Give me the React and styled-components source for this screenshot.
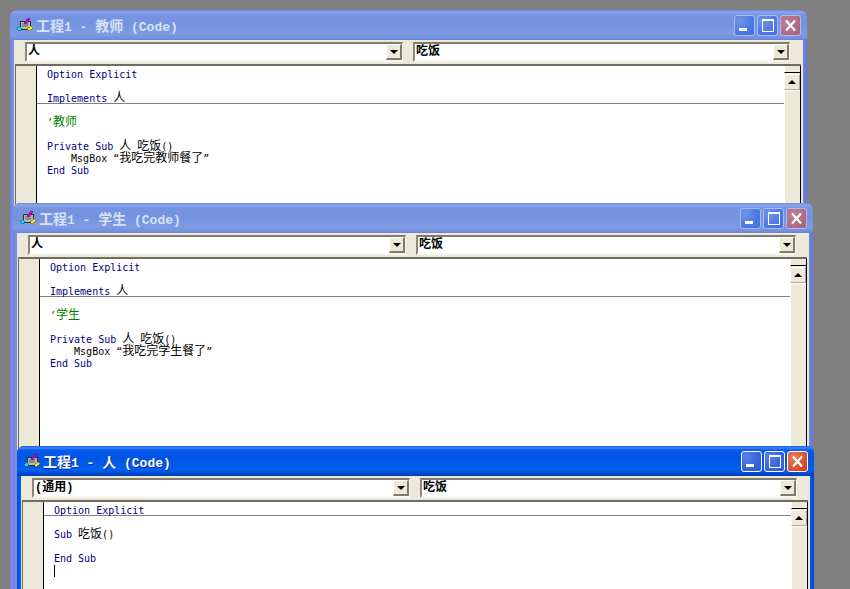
import React from "react";
import styled, { createGlobalStyle } from "styled-components";

const GlobalStyle = createGlobalStyle`
  html, body {
    margin: 0;
    height: 100%;
    overflow: hidden;
    background: #808080;
  }
`;

const MONO = `"DejaVu Sans Mono", "Liberation Mono", "Noto Sans CJK SC", monospace`;
const TITLE_MONO = `"Liberation Mono", "Noto Sans CJK SC", monospace`;

const Desktop = styled.div`
  position: relative;
  width: 850px;
  height: 589px;
  overflow: hidden;
  background: #808080;
`;

const Window = styled.div`
  position: absolute;
  left: ${(p) => p.$x}px;
  top: ${(p) => p.$y}px;
  width: ${(p) => p.$w}px;
  height: 600px;
  box-sizing: border-box;
  padding: 0 4px;
  border-radius: 7px 7px 0 0;
  display: flex;
  flex-direction: column;
  background: ${(p) =>
    p.$active
      ? "linear-gradient(90deg, #0047d8 0, #0058ee 2px, #0058ee calc(100% - 2px), #0040c8 100%)"
      : "linear-gradient(90deg, #6f7fdc 0, #7b8ce4 2px, #6f7fe0 calc(100% - 2px), #6470d4 100%)"};
`;

const TitleBar = styled.div`
  height: 30px;
  margin: 0 -4px;
  padding: 0 6px 0 7px;
  flex: none;
  box-sizing: border-box;
  display: flex;
  align-items: center;
  border-radius: 7px 7px 0 0;
  background: ${(p) =>
    p.$active
      ? "linear-gradient(180deg, #0a5fe8 0, #3d86f6 2px, #0a5bf0 4px, #0054e3 12px, #0060f0 24px, #0048c8 28px, #0038b0 30px)"
      : "linear-gradient(180deg, #6a86dc 0, #8ba5ec 2px, #7694e2 5px, #7392e0 14px, #7e9be4 24px, #7590de 28px, #6a7fd8 30px)"};
`;

const TitleText = styled.span`
  margin-left: 3px;
  font: bold 13px ${TITLE_MONO};
  white-space: pre;
  color: ${(p) => (p.$active ? "#ffffff" : "#d8e2f6")};
  text-shadow: ${(p) => (p.$active ? "1px 1px 0 #0a2f98" : "none")};
`;

const Wide = styled.span`
  font-size: 14px;
`;

const CaptionButtons = styled.div`
  margin-left: auto;
  display: flex;
  gap: 2px;
`;

const CaptionButton = styled.div`
  width: 21px;
  height: 21px;
  box-sizing: border-box;
  border-radius: 3px;
  display: flex;
  align-items: center;
  justify-content: center;
  border: 1px solid ${(p) => (p.$active ? "#ffffff" : "#a9bbf0")};
  background: ${(p) =>
    p.$close
      ? p.$active
        ? "radial-gradient(circle at 30% 30%, #e8815f, #d8482a 70%, #c73818)"
        : "radial-gradient(circle at 30% 30%, #bd7f95, #b06880 70%, #a85c7c)"
      : p.$active
      ? "radial-gradient(circle at 25% 25%, #5a80e8, #3a66dc 55%, #2a55e0)"
      : "radial-gradient(circle at 25% 25%, #7094e6, #4d78e4 60%, #3f6ee8)"};
`;

const ClientArea = styled.div`
  flex: 1;
  display: flex;
  flex-direction: column;
  background: #ece9d8;
`;

const ComboBar = styled.div`
  flex: none;
  height: 24px;
  box-sizing: border-box;
  padding: 2px 13px 0 11px;
  display: flex;
  gap: 10px;
`;

const Combo = styled.div`
  flex: ${(p) => (p.$fixed ? "0 0 378px" : "1")};
  height: 20px;
  box-sizing: border-box;
  display: flex;
  align-items: center;
  justify-content: space-between;
  background: #ffffff;
  border-style: solid;
  border-width: 2px 1px 2px 2px;
  border-color: #7f7c6e #f7f6ef #f7f6ef #8c897a;
`;

const ComboText = styled.span`
  padding-left: 1px;
  font: bold 12px/14px ${TITLE_MONO};
  color: #000000;
`;

const ArrowButton = styled.div`
  width: 16px;
  height: 16px;
  box-sizing: border-box;
  display: flex;
  align-items: center;
  justify-content: center;
  background: #ece9d8;
  border-style: solid;
  border-width: 1px 2px 2px 1px;
  border-color: #ffffff #7f7c6e #7f7c6e #ffffff;
`;

const Triangle = styled.i`
  display: block;
  width: 0;
  height: 0;
  border-left: 4px solid transparent;
  border-right: 4px solid transparent;
  ${(p) => (p.$up ? "border-bottom" : "border-top")}: 4px solid #000000;
`;

const CodePane = styled.div`
  flex: 1;
  margin: 0 2px 0 1px;
  display: flex;
  background: #ffffff;
  border-top: 2px solid #6f6d62;
  border-left: 1px solid #6f6d62;
`;

const Gutter = styled.div`
  flex: none;
  width: 20px;
  background: #ece9d8;
  border-right: 1px solid #000000;
`;

const Code = styled.div`
  flex: 1;
  padding-top: 2px;
  font: 10px/12px ${MONO};
  color: #000000;
`;

const Line = styled.div`
  height: 12px;
  box-sizing: border-box;
  padding: 1px 0 0 10px;
  white-space: pre;
  border-bottom: ${(p) => (p.$rule ? "1px solid #808080" : "none")};
`;

const Keyword = styled.span`
  color: #000080;
`;

const Note = styled.span`
  color: #008000;
`;

const Han = styled.span`
  font-size: 12px;
  line-height: 0;
`;

const Caret = styled.i`
  display: inline-block;
  width: 1px;
  height: 12px;
  vertical-align: top;
  background: #000000;
`;

const ScrollBar = styled.div`
  flex: none;
  width: 17px;
  box-sizing: border-box;
  display: flex;
  flex-direction: column;
  border-right: 1px solid #000000;
  background: #ece9d8;
`;

const SplitBox = styled.div`
  flex: none;
  height: 7px;
  box-sizing: border-box;
  background: #ece9d8;
  border-left: 1px solid #ffffff;
  border-bottom: 1px solid #000000;
`;

const ScrollButton = styled.div`
  flex: none;
  height: 16px;
  margin-top: 1px;
  box-sizing: border-box;
  display: flex;
  align-items: center;
  justify-content: center;
  background: #ece9d8;
  border-style: solid;
  border-width: 1px;
  border-color: #ffffff #aca899 #aca899 #ffffff;
`;

const Track = styled.div`
  flex: 1;
  background: #ece9d8;
  border-top: 1px solid #ffffff;
  border-left: 1px solid #ffffff;
`;

const AppIcon = () => (
  <svg width="16" height="14" viewBox="0 0 16 14" shapeRendering="crispEdges" style={{ flex: "none" }}>
    <path d="M3 3h10v8H3z" fill="#b8b8b0" stroke="#303030" />
    <path d="M5 5h6v4H5z" fill="#8c8c88" />
    <path d="M7 5l4-5 2 1-4 5z" fill="#e000c8" stroke="#500050" strokeWidth="0.5" />
    <path d="M0 10l3-2 2 3-3 2z" fill="#18e0e8" stroke="#005060" strokeWidth="0.5" />
    <path d="M10 11l4-3 2 2-4 3z" fill="#f8e820" stroke="#605000" strokeWidth="0.5" />
  </svg>
);

const MinGlyph = () => (
  <svg width="19" height="19" viewBox="0 0 19 19" shapeRendering="crispEdges">
    <path d="M4 12h8v3H4z" fill="#fff" />
  </svg>
);

const MaxGlyph = () => (
  <svg width="19" height="19" viewBox="0 0 19 19" shapeRendering="crispEdges">
    <path d="M4 3h11v12H4z" fill="none" stroke="#fff" />
    <path d="M4 3h11v2H4z" fill="#fff" />
  </svg>
);

const CloseGlyph = () => (
  <svg width="19" height="19" viewBox="0 0 19 19">
    <path d="M5 4.5l9 10M14 4.5l-9 10" stroke="#fff" strokeWidth="2.2" fill="none" />
  </svg>
);

const Kw = ({ children }) => <Keyword>{children}</Keyword>;

const teacherLines = (who) => [
  { node: <Kw>Option Explicit</Kw> },
  { node: "" },
  {
    rule: true,
    node: (
      <>
        <Kw>Implements</Kw> <Han>人</Han>
      </>
    ),
  },
  { node: "" },
  {
    node: (
      <Note>
        ’<Han>{who}</Han>
      </Note>
    ),
  },
  { node: "" },
  {
    node: (
      <>
        <Kw>Private Sub</Kw> <Han>人</Han>_<Han>吃饭</Han>()
      </>
    ),
  },
  {
    node: (
      <>
        {"    MsgBox “"}
        <Han>我吃完{who}餐了</Han>”
      </>
    ),
  },
  { node: <Kw>End Sub</Kw> },
];

const personLines = [
  { rule: true, node: <Kw>Option Explicit</Kw> },
  { node: "" },
  {
    node: (
      <>
        <Kw>Sub</Kw> <Han>吃饭</Han>()
      </>
    ),
  },
  { node: "" },
  { node: <Kw>End Sub</Kw> },
  { node: <Caret /> },
];

const windows = [
  { x: 10, y: 10, w: 797, name: "教师", combo: "人", lines: teacherLines("教师") },
  { x: 13, y: 203, w: 800, name: "学生", combo: "人", lines: teacherLines("学生") },
  { x: 17, y: 446, w: 797, name: "人", combo: "(通用)", lines: personLines, active: true },
];

const CodeWindow = ({ x, y, w, name, combo, lines, active }) => (
  <Window $x={x} $y={y} $w={w} $active={active}>
    <TitleBar $active={active}>
      <AppIcon />
      <TitleText $active={active}>
        <Wide>工程</Wide>1 - <Wide>{name}</Wide> (Code)
      </TitleText>
      <CaptionButtons>
        <CaptionButton $active={active}>
          <MinGlyph />
        </CaptionButton>
        <CaptionButton $active={active}>
          <MaxGlyph />
        </CaptionButton>
        <CaptionButton $active={active} $close>
          <CloseGlyph />
        </CaptionButton>
      </CaptionButtons>
    </TitleBar>
    <ClientArea>
      <ComboBar>
        <Combo $fixed>
          <ComboText>{combo}</ComboText>
          <ArrowButton>
            <Triangle />
          </ArrowButton>
        </Combo>
        <Combo>
          <ComboText>吃饭</ComboText>
          <ArrowButton>
            <Triangle />
          </ArrowButton>
        </Combo>
      </ComboBar>
      <CodePane>
        <Gutter />
        <Code>
          {lines.map((line, i) => (
            <Line key={i} $rule={line.rule}>
              {line.node}
            </Line>
          ))}
        </Code>
        <ScrollBar>
          <SplitBox />
          <ScrollButton>
            <Triangle $up />
          </ScrollButton>
          <Track />
        </ScrollBar>
      </CodePane>
    </ClientArea>
  </Window>
);

export default function App() {
  return (
    <Desktop>
      <GlobalStyle />
      {windows.map((win) => (
        <CodeWindow key={win.name} {...win} />
      ))}
    </Desktop>
  );
}
